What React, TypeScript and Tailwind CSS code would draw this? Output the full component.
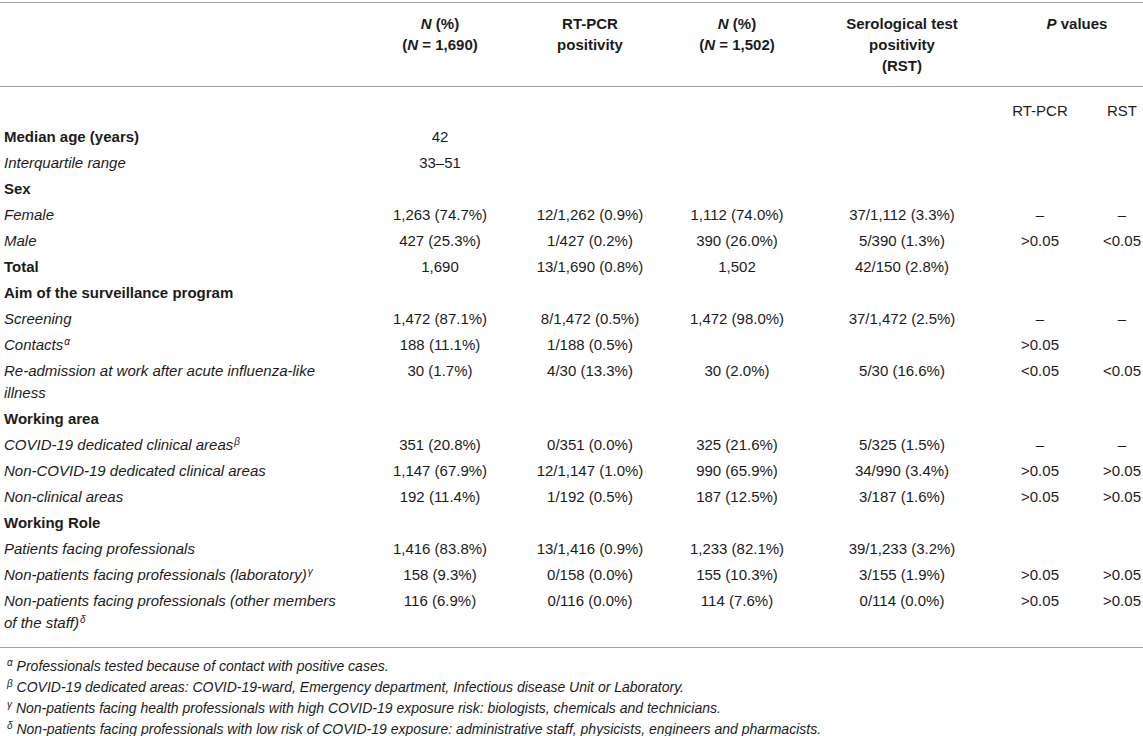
import React from "react"

type Cell = React.ReactNode

const cols = "grid grid-cols-[365px_150px_150px_144px_186px_90px_74px]"

const Sup = ({ children }: { children: React.ReactNode }) => (
  <sup className="text-[10px] ml-[1px]">{children}</sup>
)

function Row({
  label,
  cells = [],
  kind = "item",
}: {
  label: React.ReactNode
  cells?: Cell[]
  kind?: "item" | "group"
}) {
  const filled = [...cells, "", "", "", "", "", ""].slice(0, 6)
  return (
    <div className={`${cols} leading-[22px] py-[2px]`}>
      <div className={`pl-[4px] pr-[20px] ${kind === "group" ? "font-bold" : "italic"}`}>{label}</div>
      {filled.map((c, i) => (
        <div key={i} className="text-center whitespace-nowrap">
          {c}
        </div>
      ))}
    </div>
  )
}

export default function App() {
  return (
    <div className="w-[1143px] h-[736px] overflow-hidden bg-white text-[#1c1c1c] font-['Liberation_Sans',Arial,sans-serif] text-[15px]">
      <div className="mt-[2px] w-[1159px]">
        {/* Header */}
        <div className={`${cols} border-t border-b border-[#a3a3a3] pt-[10px] pb-[10px] font-bold leading-[21px]`}>
          <div></div>
          <div className="text-center">
            <div>
              <i>N</i> (%)
            </div>
            <div>
              (<i>N</i> = 1,690)
            </div>
          </div>
          <div className="text-center">
            <div>RT-PCR</div>
            <div>positivity</div>
          </div>
          <div className="text-center">
            <div>
              <i>N</i> (%)
            </div>
            <div>
              (<i>N</i> = 1,502)
            </div>
          </div>
          <div className="text-center">
            <div>Serological test</div>
            <div>positivity</div>
            <div>(RST)</div>
          </div>
          <div className="col-span-2 text-center">
            <i>P</i> values
          </div>
        </div>

        {/* Body */}
        <div className="border-b border-[#a3a3a3] pt-[11px] pb-[11px]">
          <Row label="" cells={["", "", "", "", "RT-PCR", "RST"]} />
          <Row kind="group" label="Median age (years)" cells={["42"]} />
          <Row label="Interquartile range" cells={["33–51"]} />
          <Row kind="group" label="Sex" />
          <Row label="Female" cells={["1,263 (74.7%)", "12/1,262 (0.9%)", "1,112 (74.0%)", "37/1,112 (3.3%)", "–", "–"]} />
          <Row label="Male" cells={["427 (25.3%)", "1/427 (0.2%)", "390 (26.0%)", "5/390 (1.3%)", ">0.05", "<0.05"]} />
          <Row kind="group" label="Total" cells={["1,690", "13/1,690 (0.8%)", "1,502", "42/150 (2.8%)"]} />
          <Row kind="group" label="Aim of the surveillance program" />
          <Row label="Screening" cells={["1,472 (87.1%)", "8/1,472 (0.5%)", "1,472 (98.0%)", "37/1,472 (2.5%)", "–", "–"]} />
          <Row
            label={
              <>
                Contacts<Sup>α</Sup>
              </>
            }
            cells={["188 (11.1%)", "1/188 (0.5%)", "", "", ">0.05", ""]}
          />
          <Row
            label="Re-admission at work after acute influenza-like illness"
            cells={["30 (1.7%)", "4/30 (13.3%)", "30 (2.0%)", "5/30 (16.6%)", "<0.05", "<0.05"]}
          />
          <Row kind="group" label="Working area" />
          <Row
            label={
              <>
                COVID-19 dedicated clinical areas<Sup>β</Sup>
              </>
            }
            cells={["351 (20.8%)", "0/351 (0.0%)", "325 (21.6%)", "5/325 (1.5%)", "–", "–"]}
          />
          <Row
            label="Non-COVID-19 dedicated clinical areas"
            cells={["1,147 (67.9%)", "12/1,147 (1.0%)", "990 (65.9%)", "34/990 (3.4%)", ">0.05", ">0.05"]}
          />
          <Row label="Non-clinical areas" cells={["192 (11.4%)", "1/192 (0.5%)", "187 (12.5%)", "3/187 (1.6%)", ">0.05", ">0.05"]} />
          <Row kind="group" label="Working Role" />
          <Row label="Patients facing professionals" cells={["1,416 (83.8%)", "13/1,416 (0.9%)", "1,233 (82.1%)", "39/1,233 (3.2%)"]} />
          <Row
            label={
              <>
                Non-patients facing professionals (laboratory)<Sup>γ</Sup>
              </>
            }
            cells={["158 (9.3%)", "0/158 (0.0%)", "155 (10.3%)", "3/155 (1.9%)", ">0.05", ">0.05"]}
          />
          <Row
            label={
              <>
                Non-patients facing professionals (other members of the staff)<Sup>δ</Sup>
              </>
            }
            cells={["116 (6.9%)", "0/116 (0.0%)", "114 (7.6%)", "0/114 (0.0%)", ">0.05", ">0.05"]}
          />
        </div>

        {/* Footnotes */}
        <div className="pt-[8px] pl-[6px] text-[14px] leading-[21px] italic">
          <div>
            <Sup>α</Sup> Professionals tested because of contact with positive cases.
          </div>
          <div>
            <Sup>β</Sup> COVID-19 dedicated areas: COVID-19-ward, Emergency department, Infectious disease Unit or Laboratory.
          </div>
          <div>
            <Sup>γ</Sup> Non-patients facing health professionals with high COVID-19 exposure risk: biologists, chemicals and technicians.
          </div>
          <div>
            <Sup>δ</Sup> Non-patients facing professionals with low risk of COVID-19 exposure: administrative staff, physicists, engineers and pharmacists.
          </div>
        </div>
      </div>
    </div>
  )
}
